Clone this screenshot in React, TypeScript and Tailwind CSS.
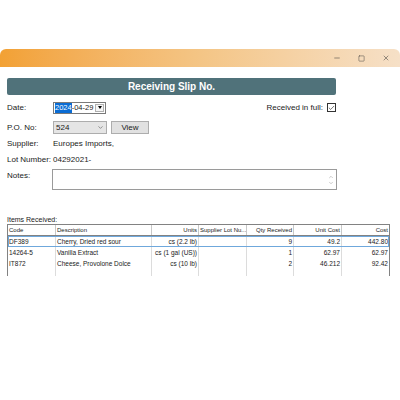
import { Minus, Square, X, ChevronDown, ChevronUp, Check } from 'lucide-react';

const rows = [
    { code: 'DF389', desc: 'Cherry, Dried red sour', units: 'cs (2.2 lb)', lot: '', qty: '9', unit: '49.2', cost: '442.80' },
    { code: '14264-5', desc: 'Vanilla Extract', units: 'cs (1 gal (US))', lot: '', qty: '1', unit: '62.97', cost: '62.97' },
    { code: 'IT872', desc: 'Cheese, Provolone Dolce', units: 'cs (10 lb)', lot: '', qty: '2', unit: '46.212', cost: '92.42' },
];

const cols = [
    { key: 'code', label: 'Code', w: 'w-[48px]', align: 'text-left' },
    { key: 'desc', label: 'Description', w: 'w-[96px]', align: 'text-left' },
    { key: 'units', label: 'Units', w: 'w-[47px]', align: 'text-right' },
    { key: 'lot', label: 'Supplier Lot Nu...', w: 'w-[48px]', align: 'text-left' },
    { key: 'qty', label: 'Qty Received', w: 'w-[47px]', align: 'text-right' },
    { key: 'unit', label: 'Unit Cost', w: 'w-[48px]', align: 'text-right' },
    { key: 'cost', label: 'Cost', w: 'w-[47px]', align: 'text-right' },
] as const;

const App = () => {
    return (
        <div className="w-[400px] h-[400px] bg-white overflow-hidden font-['Liberation_Sans',Arial,sans-serif] text-[#1a1a1a]">
            {/* Window */}
            <div className="mt-[49px] h-[300px] bg-white rounded-t-[6px] flex flex-col">
                {/* Title bar */}
                <div className="h-[18px] rounded-t-[6px] bg-gradient-to-r from-[#F2A134] via-[#F4C585] to-[#F6E0C7] flex items-center justify-end pr-[10px] gap-[17px] text-[#333]">
                    <Minus size={8} strokeWidth={1.5} />
                    <Square size={7} strokeWidth={1.5} />
                    <X size={8} strokeWidth={1.5} />
                </div>

                <div className="px-[7px] flex flex-col">
                    {/* Header */}
                    <div className="mt-[11px] w-[329px] h-[17px] rounded-[2px] bg-[#50727A] flex items-center justify-center text-white text-[10px] font-bold">
                        Receiving Slip No.
                    </div>

                    {/* Date row */}
                    <div className="mt-[6px] w-[329px] h-[13px] flex items-center text-[8px]">
                        <span className="w-[46px]">Date:</span>
                        <div className="w-[53px] h-[12px] border border-[#7a7a7a] flex items-center bg-white whitespace-nowrap text-[7.5px]">
                            <span className="ml-[1px] bg-[#0A6CD4] text-white leading-[10px]">2024</span>
                            <span>-04-29</span>
                            <div className="ml-auto mr-[1px] w-[9px] h-[8px] border border-[#b0b0b0] bg-[#f5f5f5] flex items-center justify-center">
                                <span className="w-0 h-0 border-l-[2.5px] border-r-[2.5px] border-t-[3px] border-l-transparent border-r-transparent border-t-black" />
                            </div>
                        </div>
                        <span className="ml-auto mr-[4px]">Received in full:</span>
                        <div className="w-[9px] h-[9px] border border-[#333] flex items-center justify-center">
                            <Check size={8} strokeWidth={2} />
                        </div>
                    </div>

                    {/* P.O. row */}
                    <div className="mt-[7px] h-[13px] flex items-center text-[8px]">
                        <span className="w-[46px]">P.O. No:</span>
                        <div className="w-[54px] h-[13px] border border-[#adadad] bg-[#e5e5e5] flex items-center px-[2px]">
                            <span>524</span>
                            <ChevronDown size={7} className="ml-auto text-[#555]" />
                        </div>
                        <div className="ml-[4px] w-[38px] h-[13px] border border-[#adadad] bg-[#e1e1e1] flex items-center justify-center">
                            View
                        </div>
                    </div>

                    {/* Supplier */}
                    <div className="mt-[3px] h-[13px] flex items-center text-[8px]">
                        <span className="w-[46px]">Supplier:</span>
                        <span>Europes Imports,</span>
                    </div>

                    {/* Lot number */}
                    <div className="mt-[3px] h-[13px] flex items-center text-[8px]">
                        <span className="w-[46px]">Lot Number:</span>
                        <span>04292021-</span>
                    </div>

                    {/* Notes */}
                    <div className="mt-[3px] flex items-start text-[8px]">
                        <span className="w-[45px] mt-[1px]">Notes:</span>
                        <div className="w-[285px] h-[21px] border border-[#9a9a9a] bg-white flex flex-col items-end justify-center pr-[2px] text-[#999]">
                            <ChevronUp size={6} />
                            <ChevronDown size={6} />
                        </div>
                    </div>

                    {/* Items */}
                    <div className="mt-[25px] text-[7px] leading-[9px]">Items Received:</div>
                    <div className="w-[383px] border border-[#828282] border-b-0 flex flex-col text-[6.5px]">
                        <div className="flex h-[11px] border-b border-[#828282] text-[6px]">
                            {cols.map((c) => (
                                <div key={c.key} className={`${c.w} ${c.align} border-r border-[#c8c8c8] last:border-r-0 px-[1px] leading-[11px] whitespace-nowrap overflow-hidden`}>
                                    {c.label}
                                </div>
                            ))}
                        </div>
                        {rows.map((r, i) => (
                            <div key={r.code} className={`flex h-[11px] ${i === 0 ? 'outline outline-1 outline-[#6FA8DC] -outline-offset-1' : ''}`}>
                                {cols.map((c) => (
                                    <div key={c.key} className={`${c.w} ${c.align} border-r border-[#dcdcdc] last:border-r-0 px-[1px] leading-[11px] whitespace-nowrap overflow-hidden`}>
                                        {r[c.key]}
                                    </div>
                                ))}
                            </div>
                        ))}
                        <div className="flex h-[7px]">
                            {cols.map((c) => (
                                <div key={c.key} className={`${c.w} border-r border-[#dcdcdc] last:border-r-0`} />
                            ))}
                        </div>
                    </div>
                </div>
            </div>
        </div>
    );
};

export default App;
